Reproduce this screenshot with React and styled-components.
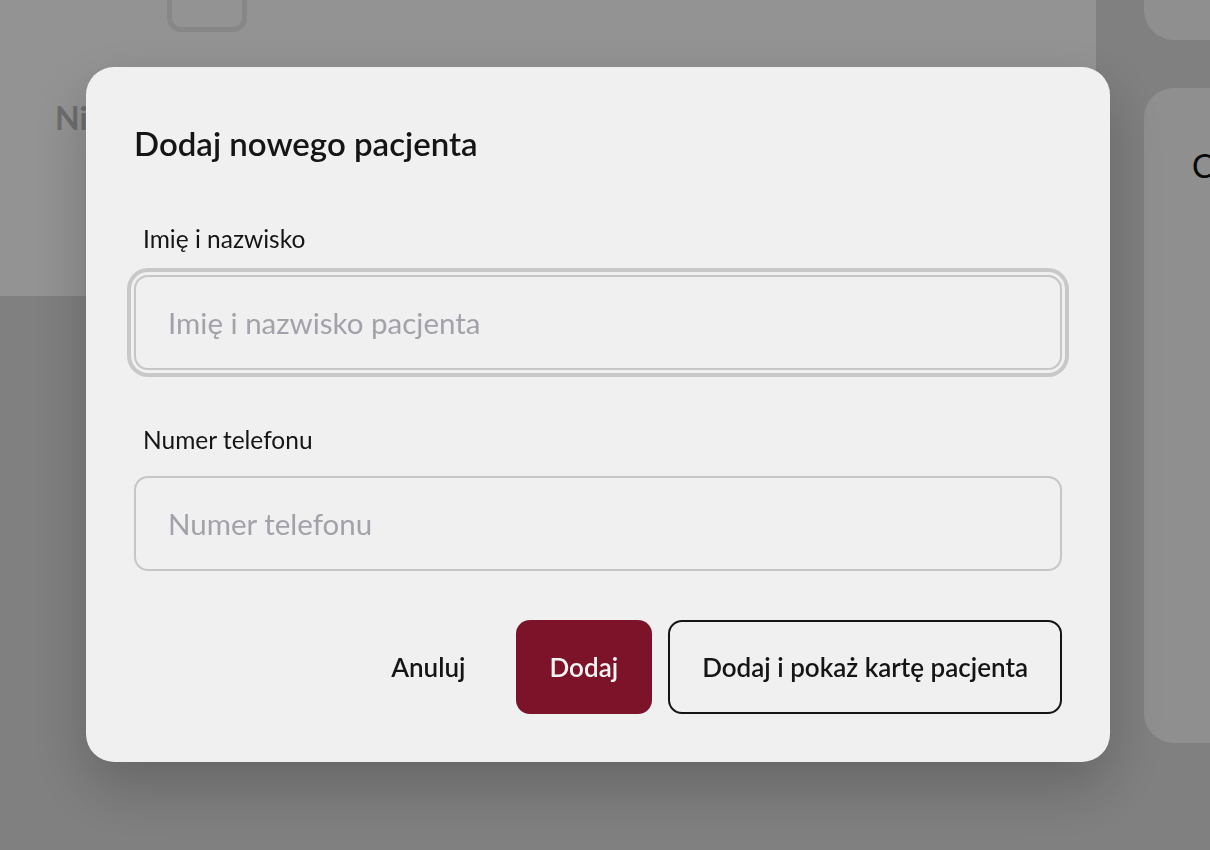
import React from "react";
import styled, { createGlobalStyle } from "styled-components";

const Global = createGlobalStyle`
  html, body { margin: 0; padding: 0; }
  body {
    width: 1210px; height: 850px; overflow: hidden;
    background: #dcdcdc;
    font-family: "Lato", "Noto Sans", sans-serif;
    color: #151515;
  }
  * { box-sizing: border-box; }
`;

const Page = styled.div`
  display: flex;
  gap: 48px;
  height: 850px;
  overflow: hidden;
`;

const MainColumn = styled.div`
  width: 1096px;
  flex: none;
`;

const TopCard = styled.div`
  height: 296px;
  background: #fdfdfd;
  padding-left: 55px;
  display: flex;
  flex-direction: column;
`;

const PhotoBox = styled.div`
  width: 80px;
  height: 82px;
  margin-top: -50px;
  margin-left: 112px;
  border: 5px solid #e8e8e8;
  border-radius: 14px;
`;

const FadedName = styled.div`
  margin-top: 66px;
  font-size: 32px;
  font-weight: 700;
  color: #bcbcbc;
`;

const SideColumn = styled.div`
  width: 320px;
  flex: none;
  display: flex;
  flex-direction: column;
  gap: 48px;
`;

const SideCard = styled.div`
  flex: none;
  background: #f6f6f6;
  border-radius: 30px;
  height: ${(p) => p.$h}px;
  margin-top: ${(p) => p.$mt || 0}px;
  padding: ${(p) => (p.$padded ? "58px 48px" : "0")};
  font-size: 32px;
  color: #111;
  white-space: nowrap;
`;

const Overlay = styled.div`
  position: fixed;
  inset: 0;
  background: rgba(0, 0, 0, 0.42);
  display: flex;
  align-items: flex-start;
  padding: 67px 0 0 86px;
`;

const Modal = styled.div`
  width: 1024px;
  background: #f0f0f0;
  border-radius: 28px;
  padding: 48px;
  box-shadow: 0 24px 60px rgba(0, 0, 0, 0.22);
  display: flex;
  flex-direction: column;
`;

const Title = styled.h2`
  margin: 8px 0 0;
  font-size: 33px;
  line-height: 40px;
  font-weight: 600;
`;

const Form = styled.div`
  display: flex;
  flex-direction: column;
  gap: 56px;
  margin-top: 62px;
`;

const Field = styled.label`
  display: flex;
  flex-direction: column;
  gap: 22px;
`;

const Label = styled.span`
  padding-left: 9px;
  font-size: 24.5px;
  line-height: 28px;
  font-weight: 400;
`;

const Input = styled.input`
  height: 95px;
  width: 100%;
  border: 2px solid #c6c6c6;
  border-radius: 14px;
  background: transparent;
  padding: 0 32px;
  font-family: inherit;
  font-size: 29.5px;
  color: #151515;
  outline: none;
  box-shadow: ${(p) =>
    p.$ring ? "0 0 0 3px #f0f0f0, 0 0 0 7px #c8c8c8" : "none"};
  &::placeholder { color: #a2a2aa; }
`;

const Actions = styled.div`
  display: flex;
  justify-content: flex-end;
  gap: 16px;
  margin-top: 49px;
`;

const Button = styled.button`
  height: 94px;
  padding: 0 32px;
  border-radius: 14px;
  font-family: inherit;
  font-size: 26px;
  font-weight: 600;
  cursor: pointer;
  border: 2px solid ${(p) => (p.$variant === "outline" ? "#151515" : "transparent")};
  background: ${(p) => (p.$variant === "primary" ? "#7c1329" : "transparent")};
  color: ${(p) => (p.$variant === "primary" ? "#f4f4f4" : "#151515")};
`;

export default function App() {
  return (
    <>
      <Global />
      <Page>
        <MainColumn>
          <TopCard>
            <PhotoBox />
            <FadedName>Nina Kowalska</FadedName>
          </TopCard>
        </MainColumn>
        <SideColumn>
          <SideCard $h={90} $mt={-50} />
          <SideCard $h={655} $padded>Chronologia</SideCard>
        </SideColumn>
      </Page>
      <Overlay>
        <Modal role="dialog" aria-label="Dodaj nowego pacjenta">
          <Title>Dodaj nowego pacjenta</Title>
          <Form>
            <Field>
              <Label>Imię i nazwisko</Label>
              <Input $ring placeholder="Imię i nazwisko pacjenta" />
            </Field>
            <Field>
              <Label>Numer telefonu</Label>
              <Input placeholder="Numer telefonu" />
            </Field>
          </Form>
          <Actions>
            <Button>Anuluj</Button>
            <Button $variant="primary">Dodaj</Button>
            <Button $variant="outline">Dodaj i pokaż kartę pacjenta</Button>
          </Actions>
        </Modal>
      </Overlay>
    </>
  );
}
